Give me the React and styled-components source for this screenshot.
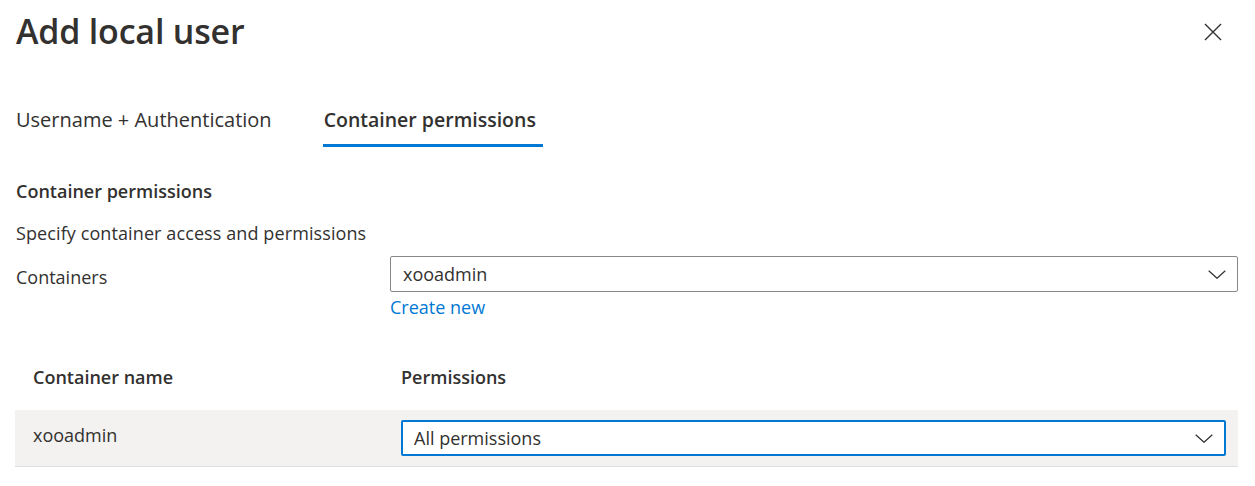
import styled, { createGlobalStyle } from "styled-components";

const GlobalStyle = createGlobalStyle`
  html, body {
    margin: 0;
    padding: 0;
    background: #fff;
  }
  body {
    font-family: "Open Sans", "Noto Sans", sans-serif;
    color: #323130;
  }
`;

const Chevron = ({ size = 18 }) => (
  <svg width={size} height={size / 2} viewBox="0 0 18 9" fill="none">
    <path d="M0.7 0.7 L9 8.3 L17.3 0.7" stroke="#323130" strokeWidth="1.2" />
  </svg>
);

export default function App() {
  return (
    <>
      <GlobalStyle />
      <Panel>
        <Header>
          <Title>Add local user</Title>
          <CloseButton aria-label="Close">
            <svg width="18" height="18" viewBox="0 0 18 18" fill="none">
              <path d="M1 1 L17 17 M17 1 L1 17" stroke="#323130" strokeWidth="1.4" />
            </svg>
          </CloseButton>
        </Header>

        <Tabs>
          <Tab>Username + Authentication</Tab>
          <Tab active>Container permissions</Tab>
        </Tabs>

        <SectionTitle>Container permissions</SectionTitle>
        <Description>Specify container access and permissions</Description>

        <FieldRow>
          <FieldLabel>Containers</FieldLabel>
          <FieldControl>
            <Dropdown>
              <span>xooadmin</span>
              <Chevron />
            </Dropdown>
            <Link href="#">Create new</Link>
          </FieldControl>
        </FieldRow>

        <Table>
          <HeaderRow>
            <HeadCell>Container name</HeadCell>
            <HeadCell>Permissions</HeadCell>
          </HeaderRow>
          <BodyRow>
            <Cell>xooadmin</Cell>
            <Cell>
              <Dropdown focused>
                <span>All permissions</span>
                <Chevron />
              </Dropdown>
            </Cell>
          </BodyRow>
        </Table>
      </Panel>
    </>
  );
}

const Panel = styled.div`
  padding: 0 17px 0 16px;
`;

const Header = styled.div`
  display: flex;
  justify-content: space-between;
  align-items: flex-start;
  height: 64px;
`;

const Title = styled.h1`
  margin: 9px 0 0;
  font-size: 34px;
  font-weight: 600;
  line-height: 44px;
  letter-spacing: -0.2px;
`;

const CloseButton = styled.button`
  margin: 23px 16px 0 0;
  padding: 0;
  border: none;
  background: none;
  display: flex;
  cursor: pointer;
`;

const Tabs = styled.div`
  display: flex;
  gap: 52px;
  margin-top: 40px;
  height: 43px;
`;

const Tab = styled.div`
  position: relative;
  font-size: ${({ active }) => (active ? "19.5px" : "20px")};
  line-height: 28px;
  padding-top: 2px;
  padding-right: ${({ active }) => (active ? "7px" : "0")};
  font-weight: ${({ active }) => (active ? 600 : 400)};
  color: #323130;

  &::after {
    content: "";
    display: ${({ active }) => (active ? "block" : "none")};
    position: absolute;
    left: -1px;
    right: 0;
    bottom: 0;
    height: 3px;
    background: #0078d4;
  }
`;

const SectionTitle = styled.div`
  margin-top: 32px;
  font-size: 18px;
  font-weight: 600;
  line-height: 24px;
`;

const Description = styled.div`
  margin-top: 18px;
  font-size: 18px;
  line-height: 24px;
  letter-spacing: 0.1px;
`;

const FieldRow = styled.div`
  display: flex;
  margin-top: 11px;
`;

const FieldLabel = styled.div`
  width: 374px;
  flex-shrink: 0;
  padding-top: 9px;
  font-size: 18px;
  line-height: 24px;
`;

const FieldControl = styled.div`
  flex: 1;
  display: flex;
  flex-direction: column;
  align-items: flex-start;
`;

const Dropdown = styled.div`
  box-sizing: border-box;
  width: 100%;
  height: 36px;
  display: flex;
  align-items: center;
  justify-content: space-between;
  padding: 0 11px 0 ${({ focused }) => (focused ? "11px" : "12px")};
  border: ${({ focused }) => (focused ? "2px solid #0078d4" : "1px solid #8a8886")};
  border-radius: 2px;
  background: #fff;
  font-size: 18px;
  color: #323130;
`;

const Link = styled.a`
  margin-top: 3px;
  font-size: 18px;
  line-height: 24px;
  color: #0078d4;
  text-decoration: none;
`;

const Table = styled.div`
  margin-top: 25px;
  margin-left: -1px;
`;

const HeaderRow = styled.div`
  display: grid;
  grid-template-columns: 386px 1fr;
  height: 66px;
  align-items: center;
`;

const HeadCell = styled.div`
  padding-left: 18px;
  font-size: 18px;
  font-weight: 600;
  &:last-child {
    padding-left: 0;
  }
`;

const BodyRow = styled.div`
  display: grid;
  grid-template-columns: 386px 1fr;
  height: 57px;
  background: #f3f2f1;
  border-bottom: 1px solid #e1dfdd;
  box-sizing: border-box;
  align-items: start;
`;

const Cell = styled.div`
  padding: 13px 0 0 18px;
  font-size: 18px;
  line-height: 24px;
  &:last-child {
    padding: 10px 12px 0 0;
  }
`;
